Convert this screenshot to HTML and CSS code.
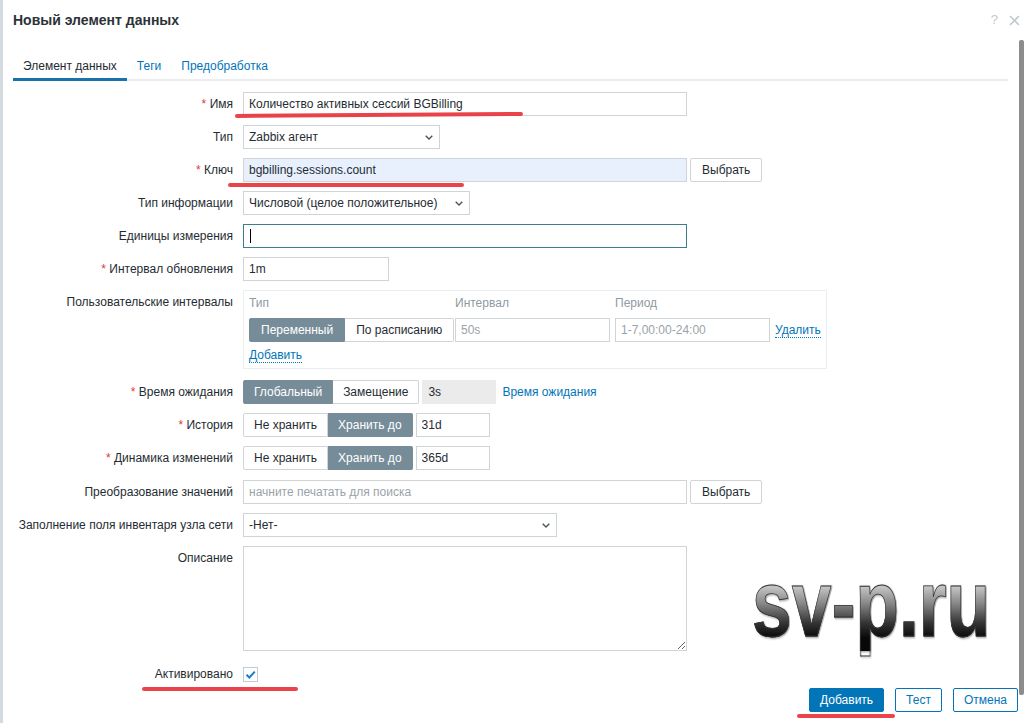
FILE: index.html
```html
<!DOCTYPE html>
<html lang="ru">
<head>
  <meta charset="UTF-8" />
  <meta name="viewport" content="width=device-width, initial-scale=1.0"/>
  <title>Новый элемент данных</title>
  <link rel="stylesheet" href="styles.css">
</head>
<body>
  <div class="dialog">
    <div class="dialog-header">
      <h4>Новый элемент данных</h4>
      <div class="header-icons">
        <span class="help">?</span>
        <svg class="close" width="11" height="11" viewBox="0 0 11 11"><path d="M1 1 L10 10 M10 1 L1 10" stroke="#c3cacf" stroke-width="1.6"/></svg>
      </div>
    </div>

    <ul class="tabs">
      <li class="active">Элемент данных</li>
      <li>Теги</li>
      <li>Предобработка</li>
    </ul>

    <div class="form">
      <div class="row">
        <div class="row-label req">Имя</div>
        <div class="field"><input class="input w-full" type="text" value="Количество активных сессий BGBilling"></div>
      </div>

      <div class="row">
        <div class="row-label">Тип</div>
        <div class="field">
          <div class="select w-type">Zabbix агент <svg width="8" height="5" viewBox="0 0 8 5"><path d="M0.7 0.7 L4 4 L7.3 0.7" fill="none" stroke="#4b565c" stroke-width="1.4"/></svg></div>
        </div>
      </div>

      <div class="row">
        <div class="row-label req">Ключ</div>
        <div class="field">
          <input class="input input-autofill w-full" type="text" value="bgbilling.sessions.count">
          <button class="btn-alt">Выбрать</button>
        </div>
      </div>

      <div class="row">
        <div class="row-label">Тип информации</div>
        <div class="field">
          <div class="select w-info">Числовой (целое положительное) <svg width="8" height="5" viewBox="0 0 8 5"><path d="M0.7 0.7 L4 4 L7.3 0.7" fill="none" stroke="#4b565c" stroke-width="1.4"/></svg></div>
        </div>
      </div>

      <div class="row">
        <div class="row-label">Единицы измерения</div>
        <div class="field"><div class="input focused w-full"><span class="caret"></span></div></div>
      </div>

      <div class="row">
        <div class="row-label req">Интервал обновления</div>
        <div class="field"><input class="input w-delay" type="text" value="1m"></div>
      </div>

      <div class="row">
        <div class="row-label">Пользовательские интервалы</div>
        <div class="field">
          <div class="intervals">
            <div class="intervals-grid">
              <div class="col-head">Тип</div>
              <div class="col-head">Интервал</div>
              <div class="col-head">Период</div>
              <div></div>

              <div class="seg seg-wide">
                <span class="on">Переменный</span>
                <span>По расписанию</span>
              </div>
              <input class="input" type="text" placeholder="50s">
              <input class="input" type="text" placeholder="1-7,00:00-24:00">
              <a class="link-dotted">Удалить</a>
            </div>
            <a class="link-dotted add-link">Добавить</a>
          </div>
        </div>
      </div>

      <div class="row row-timeout">
        <div class="row-label req">Время ожидания</div>
        <div class="field">
          <div class="seg">
            <span class="on">Глобальный</span>
            <span>Замещение</span>
          </div>
          <input class="input input-disabled w-short" type="text" value="3s" disabled>
          <a class="link">Время ожидания</a>
        </div>
      </div>

      <div class="row">
        <div class="row-label req">История</div>
        <div class="field">
          <div class="seg">
            <span>Не хранить</span>
            <span class="on">Хранить до</span>
          </div>
          <input class="input w-short" type="text" value="31d">
        </div>
      </div>

      <div class="row row-trends">
        <div class="row-label req">Динамика изменений</div>
        <div class="field">
          <div class="seg">
            <span>Не хранить</span>
            <span class="on">Хранить до</span>
          </div>
          <input class="input w-short" type="text" value="365d">
        </div>
      </div>

      <div class="row">
        <div class="row-label">Преобразование значений</div>
        <div class="field">
          <input class="input w-full" type="text" placeholder="начните печатать для поиска">
          <button class="btn-alt">Выбрать</button>
        </div>
      </div>

      <div class="row">
        <div class="row-label">Заполнение поля инвентаря узла сети</div>
        <div class="field">
          <div class="select w-inventory">-Нет- <svg width="8" height="5" viewBox="0 0 8 5"><path d="M0.7 0.7 L4 4 L7.3 0.7" fill="none" stroke="#4b565c" stroke-width="1.4"/></svg></div>
        </div>
      </div>

      <div class="row">
        <div class="row-label">Описание</div>
        <div class="field"><textarea class="textarea w-full"></textarea></div>
      </div>

      <div class="row row-last">
        <div class="row-label">Активировано</div>
        <div class="field">
          <span class="checkbox"><svg width="13" height="13" viewBox="0 0 13 13"><path d="M2.5 6.8 L5.3 9.5 L10.8 3.6" fill="none" stroke="#1a7fc0" stroke-width="2"/></svg></span>
        </div>
      </div>
    </div>

    <div class="dialog-footer">
      <button class="btn-primary">Добавить</button>
      <button class="btn-outline">Тест</button>
      <button class="btn-outline">Отмена</button>
    </div>

    <!-- overlays: watermark, hand-drawn marks, scrollbar -->
    <div class="watermark">sv-p.ru</div>
    <span class="mark mark-name"></span>
    <span class="mark mark-key"></span>
    <span class="mark mark-enabled"></span>
    <span class="mark mark-add"></span>
    <div class="scrollbar"></div>
  </div>
</body>
</html>
```

FILE: styles.css
```css
* {
  box-sizing: border-box;
}

body {
  margin: 0;
  background: #d3dbe0;
  font-family: "Liberation Sans", Arial, sans-serif;
  font-size: 12px;
  color: #1f2c33;
}

.dialog {
  position: relative;
  margin-left: 3px;
  height: 723px;
  background: #fff;
  overflow: hidden;
}

.dialog-header {
  display: flex;
  justify-content: space-between;
  align-items: flex-start;
  height: 40px;
  padding: 13px 4px 0 10px;
}

.dialog-header h4 {
  margin: 0;
  font-size: 14px;
  line-height: 14px;
  font-weight: bold;
  color: #2b3238;
}

.header-icons {
  display: flex;
  align-items: center;
  gap: 11px;
  color: #c3cacf;
  font-size: 13px;
  line-height: 14px;
}

/* tabs */
.tabs {
  display: flex;
  list-style: none;
  margin: 10px 16px 0 10px;
  padding: 0;
  border-bottom: 2px solid #ebeef0;
}

.tabs li {
  padding: 8px 10px 4px;
  line-height: 16px;
  color: #0275b8;
  border-bottom: 3px solid transparent;
  margin-bottom: -2px;
}

.tabs li.active {
  color: #1f2c33;
  border-bottom-color: #1a72aa;
}

/* form */
.form {
  display: flex;
  flex-direction: column;
  padding: 11px 10px 0;
}

.row {
  display: grid;
  grid-template-columns: 220px 1fr;
  column-gap: 10px;
  align-items: start;
  margin-bottom: 9px;
}

.row-timeout {
  margin-top: 2px;
}

.row-trends {
  margin-bottom: 10px;
}

.row-last {
  margin-top: 2px;
  margin-bottom: 0;
}

.row-label {
  text-align: right;
  line-height: 24px;
  white-space: nowrap;
}

.req::before {
  content: "* ";
  color: #e33734;
}

.field {
  display: flex;
  align-items: center;
  gap: 3px;
  min-height: 24px;
}

.input,
.select,
.textarea {
  height: 24px;
  padding: 0 5px;
  border: 1px solid #cfd4d7;
  background: #fff;
  color: #1f2c33;
  font: inherit;
  outline: none;
}

.input::placeholder {
  color: #9aa3a8;
}

.input-autofill {
  background: #e8f0fe;
}

.input-disabled {
  background: #ebebeb;
  border-color: #ebebeb;
  color: #1f2c33;
}

.focused {
  display: flex;
  align-items: center;
  border-color: #3c7f8c;
}

.caret {
  width: 1px;
  height: 14px;
  background: #000;
  margin-left: 1px;
}

.select {
  display: flex;
  align-items: center;
  justify-content: space-between;
  padding-right: 6px;
}

.textarea {
  height: 105px;
  padding: 5px;
  resize: vertical;
}

.w-full { width: 444px; }
.w-type { width: 197px; }
.w-info { width: 227px; }
.w-delay { width: 146px; }
.w-short { width: 74px; }
.w-inventory { width: 314px; }

/* segmented radio buttons */
.seg {
  display: flex;
}

.seg span {
  height: 24px;
  line-height: 22px;
  padding: 0 10px;
  border: 1px solid #cfd4d7;
  background: #fff;
  white-space: nowrap;
}

.seg span + span {
  border-left: none;
}

.seg span:first-child {
  border-radius: 2px 0 0 2px;
}

.seg span:last-child {
  border-radius: 0 2px 2px 0;
}

.seg .on {
  background: #768d99;
  border-color: #768d99;
  color: #fff;
}

.seg-wide span {
  padding: 0 11px;
}

/* custom intervals */
.intervals {
  width: 584px;
  border: 1px solid #ebeef0;
  padding: 4px 5px 5px;
}

.intervals-grid {
  display: grid;
  grid-template-columns: 201px 155px 155px auto;
  column-gap: 5px;
  align-items: center;
}

.intervals-grid .input {
  width: 155px;
}

.col-head {
  color: #8f9aa1;
  line-height: 16px;
  margin-bottom: 7px;
}

.link {
  color: #0275b8;
  margin-left: 3px;
  cursor: pointer;
}

.link-dotted {
  color: #0275b8;
  border-bottom: 1px dotted #0275b8;
  line-height: 14px;
  cursor: pointer;
  justify-self: start;
}

.add-link {
  display: inline-block;
  margin-top: 6px;
}

.checkbox {
  display: inline-flex;
  align-items: center;
  justify-content: center;
  width: 15px;
  height: 15px;
  border: 1px solid #c5ccd0;
  background: #fff;
}

/* buttons */
.btn-alt,
.btn-primary,
.btn-outline {
  height: 24px;
  padding: 0 10px;
  font: inherit;
  border-radius: 2px;
  cursor: pointer;
}

.btn-alt {
  padding: 0 11px;
  background: #fff;
  border: 1px solid #cfd4d7;
  color: #1f2c33;
}

.dialog-footer {
  display: flex;
  justify-content: flex-end;
  gap: 11px;
  padding: 2px 6px 0 0;
}

.btn-primary {
  background: #0275b8;
  border: 1px solid #0275b8;
  color: #fff;
}

.btn-outline {
  background: #fff;
  border: 1px solid #0275b8;
  color: #0275b8;
}

/* overlays */
.watermark {
  position: absolute;
  left: 749px;
  top: 557px;
  font-size: 94px;
  line-height: 1;
  font-weight: bold;
  white-space: nowrap;
  transform: scaleX(0.76);
  transform-origin: left top;
  background: linear-gradient(#c4c4c4 32%, #858585 50%, #353535 70%, #080808 86%);
  -webkit-background-clip: text;
  background-clip: text;
  color: transparent;
  -webkit-text-stroke: 0.8px #333;
  filter: drop-shadow(1px 1px 1px rgba(0, 0, 0, 0.4));
}

.mark {
  position: absolute;
  height: 4px;
  border-radius: 2px;
  background: #e8343b;
  opacity: 0.92;
}

.mark-name {
  left: 232px;
  top: 113px;
  width: 288px;
  transform: rotate(-0.4deg);
}

.mark-key {
  left: 225px;
  top: 183px;
  width: 236px;
}

.mark-enabled {
  left: 139px;
  top: 687px;
  width: 156px;
}

.mark-add {
  left: 794px;
  top: 714px;
  width: 98px;
}

.scrollbar {
  position: absolute;
  right: 0;
  top: 40px;
  width: 5px;
  height: 655px;
  border-radius: 2px;
  background: #8c8c8c;
}
```
